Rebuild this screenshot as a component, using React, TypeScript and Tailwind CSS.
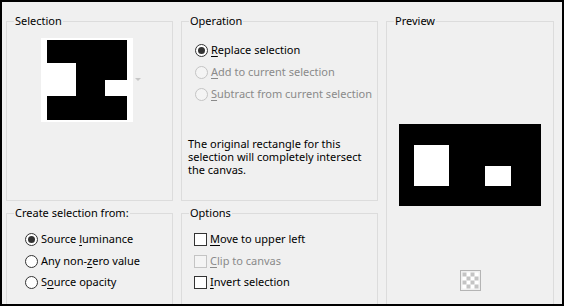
import React from "react";

function Radio({ checked, disabled }: { checked?: boolean; disabled?: boolean }) {
  return (
    <span
      className={
        "flex h-[13px] w-[13px] shrink-0 items-center justify-center rounded-full border " +
        (disabled ? "border-[#c4c4c4] bg-[#f4f4f4]" : "border-[#333333] bg-white")
      }
    >
      {checked && <span className="h-[7px] w-[7px] rounded-full bg-[#333333]" />}
    </span>
  );
}

function Check({ disabled }: { disabled?: boolean }) {
  return (
    <span
      className={
        "h-[13px] w-[13px] shrink-0 border " +
        (disabled ? "border-[#c4c4c4] bg-[#f4f4f4]" : "border-[#333333] bg-white")
      }
    />
  );
}

function Label({ pre, key1, post, disabled }: { pre?: string; key1: string; post: string; disabled?: boolean }) {
  return (
    <span className={"whitespace-nowrap " + (disabled ? "text-[#8a8a8a]" : "text-black")}>
      {pre}
      <u className="underline-offset-2">{key1}</u>
      {post}
    </span>
  );
}

function Group({
  title,
  className,
  children,
}: {
  title: string;
  className: string;
  children?: React.ReactNode;
}) {
  return (
    <fieldset className={"shrink-0 border border-[#dcdcdc] " + className}>
      <legend className="ml-[7px] px-[1px] leading-[16px] text-black">{title}</legend>
      {children}
    </fieldset>
  );
}

export default function App() {
  return (
    <div className="flex h-[306px] w-[564px] gap-[8px] overflow-hidden border-2 border-black bg-[#f0f0f0] pl-[4px] pr-[8px] pt-[11px] font-['Noto_Sans',sans-serif] text-[11px]">
      {/* left column */}
      <div className="flex w-[167px] shrink-0 flex-col gap-[4px]">
        <Group title="Selection" className="h-[188px]">
          <div className="flex items-start pl-[34px] pt-[9px]">
            <div className="bg-white px-[6px] py-[2px]">
              <svg width="80" height="80" viewBox="0 0 80 80">
                <rect width="80" height="80" fill="#000" />
                <rect x="0" y="23" width="29" height="33" fill="#fff" />
                <rect x="58" y="40" width="22" height="16" fill="#fff" />
              </svg>
            </div>
            <svg width="6" height="4" viewBox="0 0 6 4" className="ml-[2px] mt-[40px]">
              <path d="M0 0 L6 0 L3 3 Z" fill="#c6c6c6" />
            </svg>
          </div>
        </Group>
        <Group title="Create selection from:" className="h-[110px]">
          <div className="flex flex-col pl-[18px] pt-[7px]">
            <div className="flex h-[22px] items-center gap-[3px]">
              <Radio checked />
              <Label pre="Source " key1="l" post="uminance" />
            </div>
            <div className="flex h-[22px] items-center gap-[3px]">
              <Radio />
              <Label pre="Any non-" key1="z" post="ero value" />
            </div>
            <div className="flex h-[21px] items-center gap-[3px]">
              <Radio />
              <Label pre="S" key1="o" post="urce opacity" />
            </div>
          </div>
        </Group>
      </div>

      {/* middle column */}
      <div className="flex w-[197px] shrink-0 flex-col gap-[4px]">
        <Group title="Operation" className="h-[188px]">
          <div className="flex flex-col pl-[13px] pt-[10px]">
            <div className="flex h-[22px] items-center gap-[3px]">
              <Radio checked />
              <Label key1="R" post="eplace selection" />
            </div>
            <div className="flex h-[22px] items-center gap-[3px]">
              <Radio disabled />
              <Label key1="A" post="dd to current selection" disabled />
            </div>
            <div className="flex h-[22px] items-center gap-[3px]">
              <Radio disabled />
              <Label key1="S" post="ubtract from current selection" disabled />
            </div>
          </div>
          <p className="mt-[32px] pl-[6px] leading-[13px] text-black">
            The original rectangle for this
            <br />
            selection will completely intersect
            <br />
            the canvas.
          </p>
        </Group>
        <Group title="Options" className="h-[110px]">
          <div className="flex flex-col pl-[12px] pt-[7px]">
            <div className="flex h-[22px] items-center gap-[3px]">
              <Check />
              <Label key1="M" post="ove to upper left" />
            </div>
            <div className="flex h-[22px] items-center gap-[3px]">
              <Check disabled />
              <Label key1="C" post="lip to canvas" disabled />
            </div>
            <div className="flex h-[21px] items-center gap-[3px]">
              <Check />
              <Label key1="I" post="nvert selection" />
            </div>
          </div>
        </Group>
      </div>

      {/* right column */}
      <Group title="Preview" className="h-[300px] w-[168px]">
        <div className="flex flex-col items-center">
          <svg width="142" height="82" viewBox="0 0 142 82" className="mt-[95px]">
            <rect width="142" height="82" fill="#000" />
            <rect x="15" y="21" width="35" height="41" fill="#fff" />
            <rect x="86" y="42" width="26" height="20" fill="#fff" />
          </svg>
          <svg width="21" height="21" viewBox="0 0 21 21" className="mt-[64px]">
            <rect x="0.5" y="0.5" width="20" height="20" fill="#f0f0f0" stroke="#b4b4b4" />
            <rect x="2.5" y="2.5" width="16" height="16" fill="#ffffff" />
            {[0, 1, 2, 3].map((r) =>
              [0, 1, 2, 3].map((c) =>
                (r + c) % 2 === 0 ? (
                  <rect key={r + "-" + c} x={2.5 + c * 4} y={2.5 + r * 4} width="4" height="4" fill="#c4c4c4" />
                ) : null
              )
            )}
          </svg>
        </div>
      </Group>
    </div>
  );
}
